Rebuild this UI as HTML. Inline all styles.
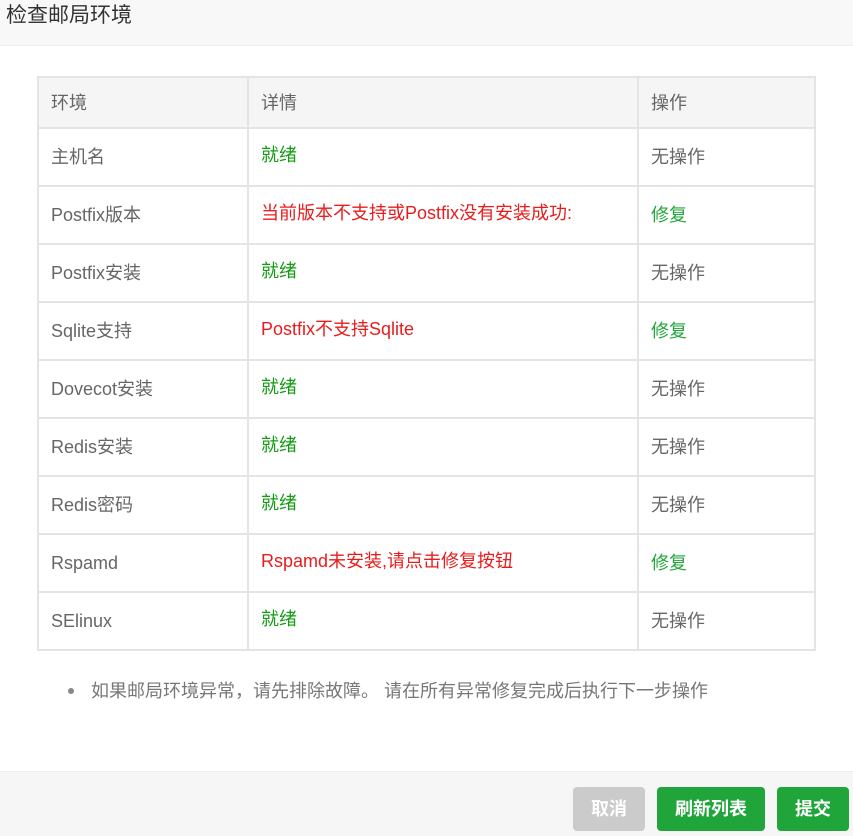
<!DOCTYPE html>
<html><head><meta charset="utf-8"><style>
*{margin:0;padding:0;box-sizing:border-box}
body{width:853px;height:836px;background:#fff;font-family:"Liberation Sans","Noto Sans CJK SC",sans-serif;position:relative;overflow:hidden}
.hd{position:absolute;left:0;top:0;width:853px;height:46px;background:#f8f8f8;border-bottom:1px solid #eee;font-size:21px;color:#333;line-height:32px;padding-left:6px}
table{position:absolute;left:37px;top:76px;width:779px;border-collapse:collapse;font-size:18px}
td,th{border:2px solid #e4e4e4;height:58px;padding-left:12px;text-align:left;font-weight:normal;color:#666;line-height:22px;vertical-align:middle}
th{background:#f5f5f5;height:51px;color:#666}
td.d{vertical-align:top;padding-top:15px}
.g{color:#139a13}.r{color:#e81c1c}.f{color:#20a53a}
.note{position:absolute;left:68px;top:680px;font-size:18px;color:#777;line-height:22px}
.note:before{content:"";position:absolute;left:0;top:8px;width:6px;height:6px;border-radius:50%;background:#888}
.note span{margin-left:23px}
.ft{position:absolute;left:0;top:771px;width:853px;height:65px;background:#f6f6f6;border-top:1px solid #eee}
.b{position:absolute;top:15px;height:44px;border-radius:4px;color:#fff;font-weight:bold;font-size:18px;line-height:44px;text-align:center;background:#20a53a}
</style></head><body>
<div class="hd">检查邮局环境</div>
<table>
<tr><th style="width:210px">环境</th><th style="width:390px">详情</th><th>操作</th></tr>
<tr><td>主机名</td><td class="d g">就绪</td><td>无操作</td></tr>
<tr><td>Postfix版本</td><td class="d r">当前版本不支持或Postfix没有安装成功:</td><td class="f">修复</td></tr>
<tr><td>Postfix安装</td><td class="d g">就绪</td><td>无操作</td></tr>
<tr><td>Sqlite支持</td><td class="d r">Postfix不支持Sqlite</td><td class="f">修复</td></tr>
<tr><td>Dovecot安装</td><td class="d g">就绪</td><td>无操作</td></tr>
<tr><td>Redis安装</td><td class="d g">就绪</td><td>无操作</td></tr>
<tr><td>Redis密码</td><td class="d g">就绪</td><td>无操作</td></tr>
<tr><td>Rspamd</td><td class="d r">Rspamd未安装,请点击修复按钮</td><td class="f">修复</td></tr>
<tr><td>SElinux</td><td class="d g">就绪</td><td>无操作</td></tr>
</table>
<div class="note"><span>如果邮局环境异常，请先排除故障。 请在所有异常修复完成后执行下一步操作</span></div>
<div class="ft">
<div class="b" style="left:573px;width:72px;background:#cbcbcb">取消</div>
<div class="b" style="left:657px;width:108px">刷新列表</div>
<div class="b" style="left:777px;width:72px">提交</div>
</div>
</body></html>
